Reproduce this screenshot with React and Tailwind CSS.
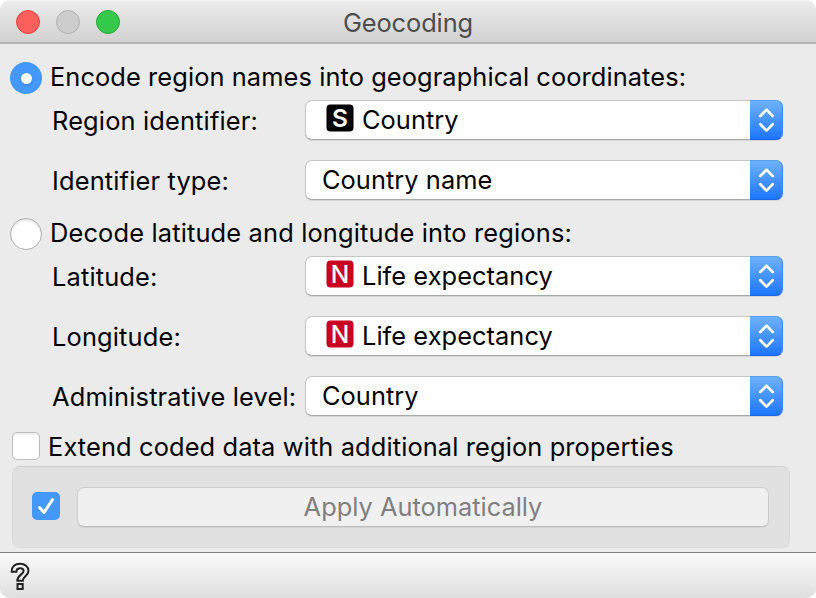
const Stepper = () => (
  <span className="-my-px -mr-px flex h-10 w-[33px] shrink-0 items-center justify-center rounded-r-[7px] border-t border-r border-b border-t-[#559ff0] border-r-[#3d86f0] border-b-[#1a62e6] bg-linear-to-b from-[#6cb1f8] to-[#1b75fc]">
    <svg width="32" height="38" viewBox="0 0 32 38" fill="none" stroke="white" strokeWidth="2.7" strokeLinecap="round" strokeLinejoin="round">
      <path d="M10.3 15 16.5 8.6 22.7 15M10.3 23.2 16.5 29.6 22.7 23.2" />
    </svg>
  </span>
);

const Badge = ({ kind }) => (
  <svg className="mr-2 ml-1 shrink-0 -translate-y-0.5" width="28" height="28" viewBox="0 0 28 28">
    <rect x="0.5" y="0.5" width="27" height="27" rx="4" fill={kind === "S" ? "#000" : "#ca0020"} />
    <text x="14" y="23" textAnchor="middle" fontSize="24.5" fontWeight={kind === "S" ? 600 : 500} fill="white">{kind}</text>
  </svg>
);

const Select = ({ kind, children }) => (
  <div className="flex h-10 w-[478px] items-center rounded-[7px] border border-[#c6c6c6] border-b-[#a9a9a9] bg-white shadow-[0_1px_1px_#00000018]">
    <div className="flex flex-1 items-center pl-4 tracking-[0.05px]">
      {kind && <Badge kind={kind} />}
      <span>{children}</span>
    </div>
    <Stepper />
  </div>
);

const Row = ({ label, kind, children }) => (
  <div className="flex h-10 items-center">
    <div className="w-[305px] pt-0.5 pl-[52px] tracking-[0.16px] whitespace-nowrap">{label}</div>
    <Select kind={kind}>{children}</Select>
  </div>
);

export default function App() {
  return (
    <div className="h-[598px] w-[816px] bg-white">
      <div className="flex h-full flex-col overflow-hidden rounded-[10px] bg-[#ebebeb] font-['Inter',sans-serif] text-[25.4px] leading-8 whitespace-nowrap text-black">
        <header className="grid h-11 shrink-0 grid-cols-[1fr_auto_1fr] items-center border-b-2 border-b-[#b4b4b4] bg-linear-to-b from-[#ececec] to-[#d2d2d2] shadow-[inset_0_1px_0_#f6f6f6]">
          <div className="flex gap-4 pt-0.5 pl-4">
            <span className="size-6 rounded-full border border-[#e2463f] bg-[#fc605c]" />
            <span className="size-6 rounded-full border border-[#b0b0b0] bg-[#cdcdcd]" />
            <span className="size-6 rounded-full border border-[#2aa83b] bg-[#34c94b]" />
          </div>
          <h1 className="pt-[3px] tracking-[-0.1px] text-[#4d4d4d]">Geocoding</h1>
          <div />
        </header>

        <main className="flex flex-1 flex-col">
          <div className="flex h-14 items-center pt-3 pl-2.5">
            <span className="flex size-8 items-center justify-center rounded-full bg-[#4498f9]">
              <span className="size-[11px] rounded-full bg-white shadow-[0_1px_2px_#0003]" />
            </span>
            <span className="pb-0.5 pl-2 tracking-[0.09px]">Encode region names into geographical coordinates:</span>
          </div>
          <div className="flex flex-col gap-5">
            <Row label="Region identifier:" kind="S">Country</Row>
            <Row label="Identifier type:">Country name</Row>
          </div>
          <div className="flex h-14 items-center pt-3 pl-2.5">
            <span className="size-8 rounded-full border border-[#b0b0b0] bg-white shadow-[inset_0_2px_2px_#0000001a]" />
            <span className="pb-0.5 pl-2 tracking-[0.16px]">Decode latitude and longitude into regions:</span>
          </div>
          <div className="flex flex-col gap-5">
            <Row label="Latitude:" kind="N">Life expectancy</Row>
            <Row label="Longitude:" kind="N">Life expectancy</Row>
            <Row label="Administrative level:">Country</Row>
          </div>
          <div className="flex h-[50px] items-center pt-[10px] pl-3">
            <span className="size-7 rounded-[5px] border border-[#bcbcbc] bg-white shadow-[inset_0_2px_2px_#00000012]" />
            <span className="pt-0.5 pl-2 tracking-[0.12px]">Extend coded data with additional region properties</span>
          </div>
          <section className="mr-[26px] ml-3 flex h-[82px] items-center rounded-[8px] border border-[#d9d9d9] border-t-[#cfcfcf] bg-[#e1e1e1] pr-5 pl-[19px]">
            <span className="mb-0.5 flex size-7 items-center justify-center rounded-[5px] bg-[#4498f9]">
              <svg width="28" height="28" viewBox="0 0 28 28" fill="none" stroke="white" strokeWidth="3" strokeLinecap="round" strokeLinejoin="round">
                <path d="M7.5 15.5 12 20.5 20.5 7.7" />
              </svg>
            </span>
            <button className="ml-[17px] h-10 flex-1 rounded-[7px] border border-[#cdcdcd] border-b-[#bdbdbd] bg-[#f0f0f0] text-[#7f7f7f] shadow-[0_1px_1px_#00000010]">
              Apply Automatically
            </button>
          </section>
        </main>

        <footer className="flex h-[46px] shrink-0 items-start border-t border-[#808080] bg-linear-to-b from-[#fafafa] to-[#dfdfdf] pt-[9px] pl-2.5">
          <svg width="21" height="29" viewBox="0 0 21 29" fill="none" stroke="#222" strokeWidth="2">
            <path d="M1.7 9.7C1.7 4.7 5 1.7 10 1.7S18.5 4.8 18.5 9C18.5 13.4 12.8 14.5 12.8 18.7H7.3C7.3 13.2 13.6 12.1 13.6 9.1C13.6 7.2 12.3 6.2 10.2 6.2S6.5 7.4 6.4 9.7Z" />
            <path d="M7.5 22H12.7V27H7.5Z" />
          </svg>
        </footer>
      </div>
    </div>
  );
}
